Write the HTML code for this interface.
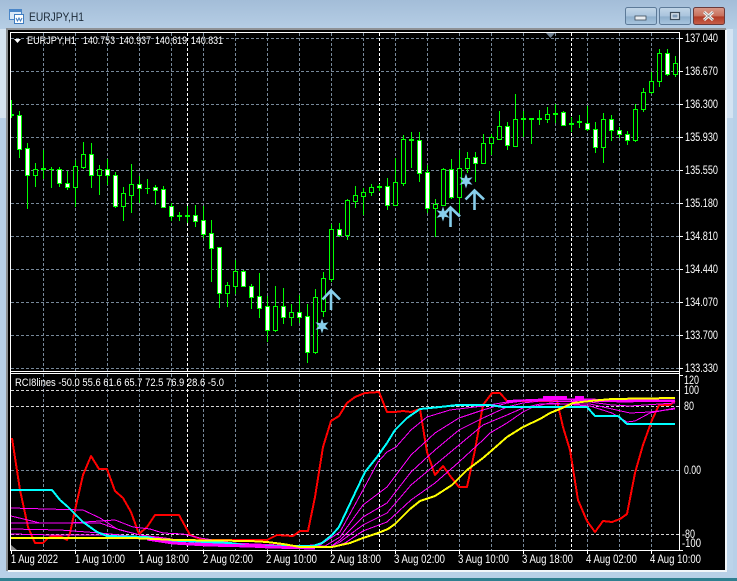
<!DOCTYPE html>
<html><head><meta charset="utf-8"><title>EURJPY,H1</title>
<style>
html,body{margin:0;padding:0;background:#b8d0e8;width:737px;height:581px;overflow:hidden}
svg{display:block}
text{font-family:"Liberation Sans",sans-serif;font-size:11.5px;fill:#fff}
</style></head><body>
<svg width="737" height="581" viewBox="0 0 737 581" xmlns="http://www.w3.org/2000/svg">
<defs>
<linearGradient id="tb" x1="0" y1="0" x2="0" y2="1"><stop offset="0" stop-color="#a3bdd8"/><stop offset="1" stop-color="#b6cee5"/></linearGradient>
<linearGradient id="b1" x1="0" y1="0" x2="0" y2="1"><stop offset="0" stop-color="#c3d6e8"/><stop offset=".5" stop-color="#a9c4dd"/><stop offset=".55" stop-color="#8fafcc"/><stop offset="1" stop-color="#a9c6e0"/></linearGradient>
<linearGradient id="b2" x1="0" y1="0" x2="0" y2="1"><stop offset="0" stop-color="#d99a8a"/><stop offset=".5" stop-color="#c8705c"/><stop offset=".55" stop-color="#b03a25"/><stop offset="1" stop-color="#c8604a"/></linearGradient>
<clipPath id="sub"><rect x="11" y="374" width="668" height="176"/></clipPath>
<clipPath id="main"><rect x="11" y="33" width="668" height="338"/></clipPath>
<path id="st" d="M0-7.500L1.600-2.800 6.500-3.750 3.200 0 6.500 3.750 1.600 2.800 0 7.500-1.600 2.800-6.500 3.750-3.200 0-6.500-3.750-1.600-2.800z" fill="#87ceeb"/>
</defs>

<!-- window chrome -->
<rect width="737" height="581" fill="#b8d0e8"/>
<rect width="737" height="29" fill="url(#tb)"/>
<rect x="0" y="29" width="6" height="89" fill="#d6e4f1"/>
<rect x="727" y="29" width="6" height="89" fill="#d3e3f2"/>
<rect x="727" y="118" width="6" height="452" fill="#bcd4ea"/>
<rect x="6" y="28" width="720" height="2" fill="#8f9296"/>
<rect x="6" y="28" width="2" height="543" fill="#8a8d90"/>
<rect x="725" y="30" width="2" height="542" fill="#f2f6fa"/>
<rect x="8" y="570" width="719" height="2" fill="#f2f6fa"/>
<rect x="0" y="578" width="737" height="3" fill="#2f7f90"/>

<!-- title icon -->
<rect x="9.500" y="9.500" width="12" height="10" fill="#dbe9f8" stroke="#4a86c8"/>
<rect x="10" y="10" width="11" height="2" fill="#4a86c8"/>
<rect x="14.500" y="14.500" width="9" height="9" fill="#fff" stroke="#3f7cc0"/>
<path d="M16 18l1.500 3 1.500-3 1.500 3 1.500-3" fill="none" stroke="#3f7cc0"/>
<text x="29" y="21" textLength="55" lengthAdjust="spacingAndGlyphs" style="font-size:12px;fill:#1c2a38">EURJPY,H1</text>

<!-- window buttons -->
<rect x="625.500" y="7.500" width="31" height="17" rx="2" fill="url(#b1)" stroke="#5d7a98"/>
<rect x="635" y="16" width="11" height="4" fill="#e8edf2" stroke="#3c4a58" stroke-width=".8"/>
<rect x="659.500" y="7.500" width="31" height="17" rx="2" fill="url(#b1)" stroke="#5d7a98"/>
<rect x="670.500" y="12.500" width="9" height="7" fill="#d8e2ec" stroke="#3c4a58" stroke-width="1.200"/>
<rect x="672.500" y="14.500" width="5" height="3" fill="#7d97b2"/>
<rect x="693.500" y="7.500" width="31" height="17" rx="2" fill="url(#b2)" stroke="#6a3a3a"/>
<path d="M704 12l9 8M713 12l-9 8" stroke="#eee" stroke-width="3" fill="none"/>
<path d="M704 12l9 8M713 12l-9 8" stroke="#3a3a3a" stroke-width=".5" fill="none"/>

<!-- chart background -->
<rect x="8" y="30" width="717" height="540" fill="#000"/>

<!-- grid -->
<g shape-rendering="crispEdges" fill="none">
<path stroke="#778899" stroke-dasharray="3 2" d="M11 38.500H679M11 71.500H679M11 104.500H679M11 137.500H679M11 170.500H679M11 203.500H679M11 236.500H679M11 269.500H679M11 302.500H679M11 335.500H679M11 368.500H679M11 470.500H679"/>
<path stroke="#778899" stroke-dasharray="3 2" d="M43.500 33V371M75.500 33V371M107.500 33V371M139.500 33V371M171.500 33V371M203.500 33V371M235.500 33V371M267.500 33V371M299.500 33V371M331.500 33V371M363.500 33V371M395.500 33V371M427.500 33V371M459.500 33V371M491.500 33V371M523.500 33V371M555.500 33V371M587.500 33V371M619.500 33V371M651.500 33V371"/>
<path stroke="#778899" stroke-dasharray="3 2" d="M43.500 374V550M75.500 374V550M107.500 374V550M139.500 374V550M171.500 374V550M203.500 374V550M235.500 374V550M267.500 374V550M299.500 374V550M331.500 374V550M363.500 374V550M395.500 374V550M427.500 374V550M459.500 374V550M491.500 374V550M523.500 374V550M555.500 374V550M587.500 374V550M619.500 374V550M651.500 374V550"/>
<path stroke="#d4d4d4" stroke-dasharray="3 2" d="M11 390.500H679M11 406.500H679M11 534.500H679"/>
<path stroke="#fff" stroke-dasharray="3 2" d="M187.500 33V371M379.500 33V371M571.500 33V371M187.500 374V550M379.500 374V550M571.500 374V550"/>
</g>

<!-- candles -->
<g clip-path="url(#main)" shape-rendering="crispEdges">
<path fill="none" stroke="#0f0" d="M11.500 100V118M19.500 111V158M27.500 143V209M35.500 163V187M43.500 150V179M51.500 167V188M59.500 167V187M67.500 171V190M75.500 160V207M83.500 142V169M91.500 143V188M99.500 165V195M107.500 159V185M115.500 172V208M123.500 187V221M131.500 164V213M139.500 176V203M147.500 179V194M155.500 185V205M163.500 186V208M171.500 203V221M179.500 212V221M187.500 206V223M195.500 205V227M203.500 206V238M211.500 220V282M219.500 247V308M227.500 282V307M235.500 260V294M243.500 270V287M251.500 284V309M259.500 273V318M267.500 296V342M275.500 286V332M283.500 288V324M291.500 304V326M299.500 295V323M307.500 304V363M315.500 289V354M323.500 272V317M331.500 224V282M339.500 223V237M347.500 199V240M355.500 186V208M363.500 188V215M371.500 184V196M379.500 184V191M387.500 178V210M395.500 158V205M403.500 135V186M411.500 132V168M419.500 132V182M427.500 165V213M435.500 199V237M443.500 168V206M451.500 159V199M459.500 150V213M467.500 152V173M475.500 152V182M483.500 134V163M491.500 134V155M499.500 111V139M507.500 122V150M515.500 94V146M523.500 111V137M531.500 118V144M539.500 110V125M547.500 107V123M555.500 104V123M563.500 111V126M571.500 117V132M579.500 115V128M587.500 106V131M595.500 122V153M603.500 113V163M611.500 115V141M619.500 127V138M627.500 131V145M635.500 104V142M643.500 88V112M651.500 72V94M659.500 49V87M667.500 49V76M675.500 56V77"/>
<path fill="#0f0" d="M9 114h5v2H9zM41 168h5v2h-5zM49 169h5v1h-5zM145 188h5v1h-5zM177 215h5v2h-5zM185 215h5v2h-5zM377 186h5v2h-5zM409 139h5v2h-5zM521 118h5v2h-5zM529 118h5v2h-5zM537 118h5v2h-5zM553 113h5v2h-5zM569 123h5v2h-5zM577 121h5v2h-5z"/>
<path fill="#000" stroke="#0f0" d="M33.500 169.500h4v6h-4zM73.500 166.500h4v21h-4zM81.500 154.500h4v13h-4zM97.500 169.500h4v6h-4zM121.500 193.500h4v13h-4zM129.500 184.500h4v11h-4zM225.500 285.500h4v8h-4zM233.500 271.500h4v15h-4zM273.500 306.500h4v24h-4zM289.500 312.500h4v5h-4zM313.500 297.500h4v55h-4zM321.500 278.500h4v33h-4zM329.500 229.500h4v50h-4zM345.500 200.500h4v35h-4zM353.500 195.500h4v6h-4zM361.500 192.500h4v4h-4zM369.500 187.500h4v5h-4zM393.500 182.500h4v23h-4zM401.500 139.500h4v44h-4zM433.500 204.500h4v4h-4zM441.500 169.500h4v36h-4zM457.500 168.500h4v29h-4zM465.500 158.500h4v10h-4zM481.500 143.500h4v20h-4zM489.500 137.500h4v6h-4zM497.500 126.500h4v13h-4zM513.500 119.500h4v27h-4zM545.500 114.500h4v5h-4zM601.500 119.500h4v28h-4zM633.500 109.500h4v31h-4zM641.500 92.500h4v17h-4zM649.500 81.500h4v11h-4zM657.500 53.500h4v28h-4zM673.500 63.500h4v11h-4z"/>
<path fill="#fff" stroke="#0f0" d="M17.500 115.500h4v34h-4zM25.500 148.500h4v27h-4zM57.500 169.500h4v14h-4zM65.500 183.500h4v4h-4zM89.500 154.500h4v21h-4zM105.500 169.500h4v6h-4zM113.500 175.500h4v31h-4zM137.500 184.500h4v4h-4zM153.500 187.500h4v3h-4zM161.500 189.500h4v18h-4zM169.500 206.500h4v10h-4zM193.500 215.500h4v6h-4zM201.500 220.500h4v14h-4zM209.500 233.500h4v15h-4zM217.500 247.500h4v46h-4zM241.500 271.500h4v15h-4zM249.500 286.500h4v11h-4zM257.500 296.500h4v12h-4zM265.500 306.500h4v24h-4zM281.500 306.500h4v11h-4zM297.500 312.500h4v5h-4zM305.500 316.500h4v36h-4zM337.500 229.500h4v6h-4zM385.500 186.500h4v19h-4zM417.500 140.500h4v33h-4zM425.500 172.500h4v36h-4zM449.500 169.500h4v28h-4zM473.500 157.500h4v6h-4zM505.500 126.500h4v19h-4zM561.500 112.500h4v13h-4zM585.500 123.500h4v6h-4zM593.500 129.500h4v18h-4zM609.500 119.500h4v11h-4zM617.500 130.500h4v4h-4zM625.500 134.500h4v6h-4zM665.500 53.500h4v21h-4z"/>
</g>

<!-- arrows and stars -->
<g fill="none" stroke="#87ceeb" stroke-width="2.600">
<path d="M322.500 299.500L331 290.500 340 299.500M331 290V310"/>
<path d="M441.500 216.500L450.500 207.500 460 216.500M450.500 207V227"/>
<path d="M465.500 199.500L474.500 190.500 484 199.500M474.500 190V210"/>
</g>
<use href="#st" x="322" y="326"/>
<use href="#st" x="443" y="214"/>
<use href="#st" x="466" y="181"/>

<!-- small markers -->
<path d="M546 33h9l-4.500 5z" fill="#6f8091"/>
<path d="M14 39h7l-3.500 4z" fill="#fff"/>
<path d="M11 545l6 5h-6z" fill="#8a8a8a"/>

<!-- RCI lines -->
<g clip-path="url(#sub)" fill="none" stroke-linejoin="round" shape-rendering="crispEdges">
<path stroke="#f00" stroke-width="2" d="M12 438L20 490 28 527 35 543 43 543 48 538 52 536 60 536 67 540 70 533 75 510 83 475 91 456 99 469 107 469 115 491 123 498 131 512 139 534 147 527 155 515 179 515 190 535 203 540 250 540 267 540 277 535 293 536 300 531 308 531 315 497 323 447 331 421 339 416 347 403 355 397 365 393 379 392 387 412 395 412 403 411 411 412 420 409 427 452 435 475 443 466 451 477 459 487 467 487 475 450 483 405 492 393 500 393 507 401 557 401 563 427 570 450 578 500 587 521 595 532 603 521 612 522 620 519 627 514 635 473 643 445 652 420 659 405 670 405 675 401"/>
<g stroke="#f0f" stroke-width="1">
<path d="M11 508L83 510 100 518 117 529 140 535 165 538 190 542 230 544 280 546 320 545 340 532 363 490 378 462 387 452 396 447 411 430 427 417 450 410 483 406 507 402 523 400 560 399 590 399 612 400 675 399"/>
<path d="M11 516L40 523 70 523 115 520 133 527 150 529 163 533 183 534 200 538 233 543 280 547 325 546 340 537 363 505 387 487 411 455 435 433 459 418 483 410 507 403 523 401 560 400 590 400 620 402 675 401"/>
<path d="M11 523L75 523 100 523 120 530 140 535 170 540 230 545 330 547 340 540 363 517 387 503 411 472 435 450 459 430 483 418 507 407 523 403 540 401 590 402 612 405 630 406 675 403"/>
<path d="M11 529L60 530 100 533 130 536 180 541 330 547 340 542 363 525 387 513 411 485 435 465 459 445 483 425 507 415 523 408 540 404 590 404 612 409 630 413 650 412 675 409"/>
<path d="M11 534L55 535 100 535 150 538 200 542 332 547 345 543 363 531 387 522 411 500 435 483 459 462 483 440 490 433 507 423 523 412 533 407 550 403 590 406 612 413 627 422 635 421 650 413 675 408"/>
</g>
<path stroke="#0ff" stroke-width="2" d="M11 490L52 490 60 500 68 507 83 522 97 532 107 536 147 537 160 540 230 543 250 546 313 546 322 543 332 535 339 527 347 510 355 493 365 472 377 457 387 443 395 430 407 418 420 409 440 407 457 405 490 405 503 407 587 407 595 416 618 416 627 424 675 424"/>
<path stroke="#f0f" stroke-width="3" d="M147 539L173 543 207 545 250 546 270 547 315 548"/>
<path stroke="#f0f" stroke-width="2" d="M507 401L557 399 600 401 675 401"/>
<path stroke="#f0f" stroke-width="4" d="M543 398H567M575 398H584"/>
<path stroke="#ff0" stroke-width="2" d="M11 538L133 538 177 540 250 541 267 542 283 544 300 547 332 547 350 543 363 538 378 533 388 529 395 524 410 509 420 501 435 496 452 485 467 470 483 458 490 452 507 437 523 427 540 419 550 413 560 409 573 403 590 401 612 399 675 398"/>
</g>

<!-- frames -->
<g shape-rendering="crispEdges" fill="none" stroke="#fff">
<path d="M10.500 32.500H679.500V550.500H10.500zM10 371.500H680M10 373.500H680"/>
<path d="M680 38.500h3M680 71.500h3M680 104.500h3M680 137.500h3M680 170.500h3M680 203.500h3M680 236.500h3M680 269.500h3M680 302.500h3M680 335.500h3M680 368.500h3M680 375.500h3M680 550.500h3"/>
<path d="M11.500 551v3M75.500 551v3M139.500 551v3M203.500 551v3M267.500 551v3M331.500 551v3M395.500 551v3M459.500 551v3M523.500 551v3M587.500 551v3M651.500 551v3"/>
</g>

<!-- header texts -->
<text x="27" y="44" textLength="49" lengthAdjust="spacingAndGlyphs" style="font-size:11px">EURJPY,H1</text>
<text x="83" y="44" textLength="32" lengthAdjust="spacingAndGlyphs" style="font-size:11px">140.753</text>
<text x="119" y="44" textLength="32" lengthAdjust="spacingAndGlyphs" style="font-size:11px">140.937</text>
<text x="155" y="44" textLength="32" lengthAdjust="spacingAndGlyphs" style="font-size:11px">140.619</text>
<text x="191" y="44" textLength="32" lengthAdjust="spacingAndGlyphs" style="font-size:11px">140.831</text>
<text x="15" y="386" textLength="209" lengthAdjust="spacingAndGlyphs" style="font-size:11px">RCI8lines -50.0 55.6 61.6 65.7 72.5 76.9 28.6 -5.0</text>

<!-- price axis -->
<text x="685" y="42" textLength="33" lengthAdjust="spacingAndGlyphs">137.040</text>
<text x="685" y="75" textLength="33" lengthAdjust="spacingAndGlyphs">136.670</text>
<text x="685" y="108" textLength="33" lengthAdjust="spacingAndGlyphs">136.300</text>
<text x="685" y="141" textLength="33" lengthAdjust="spacingAndGlyphs">135.930</text>
<text x="685" y="174" textLength="33" lengthAdjust="spacingAndGlyphs">135.550</text>
<text x="685" y="207" textLength="33" lengthAdjust="spacingAndGlyphs">135.180</text>
<text x="685" y="240" textLength="33" lengthAdjust="spacingAndGlyphs">134.810</text>
<text x="685" y="273" textLength="33" lengthAdjust="spacingAndGlyphs">134.440</text>
<text x="685" y="306" textLength="33" lengthAdjust="spacingAndGlyphs">134.070</text>
<text x="685" y="339" textLength="33" lengthAdjust="spacingAndGlyphs">133.700</text>
<text x="685" y="372" textLength="33" lengthAdjust="spacingAndGlyphs">133.330</text>
<text x="684" y="384" textLength="15" lengthAdjust="spacingAndGlyphs">120</text>
<text x="684" y="394" textLength="15" lengthAdjust="spacingAndGlyphs">100</text>
<text x="684" y="410" textLength="10" lengthAdjust="spacingAndGlyphs">80</text>
<text x="684" y="474" textLength="17" lengthAdjust="spacingAndGlyphs">0.00</text>
<text x="682" y="538" textLength="13" lengthAdjust="spacingAndGlyphs">-80</text>
<text x="682" y="547" textLength="19" lengthAdjust="spacingAndGlyphs">-100</text>

<!-- time axis -->
<text x="11" y="563" textLength="47" lengthAdjust="spacingAndGlyphs">1 Aug 2022</text>
<text x="75" y="563" textLength="50" lengthAdjust="spacingAndGlyphs">1 Aug 10:00</text>
<text x="139" y="563" textLength="50" lengthAdjust="spacingAndGlyphs">1 Aug 18:00</text>
<text x="203" y="563" textLength="50" lengthAdjust="spacingAndGlyphs">2 Aug 02:00</text>
<text x="266" y="563" textLength="51" lengthAdjust="spacingAndGlyphs">2 Aug 10:00</text>
<text x="330" y="563" textLength="51" lengthAdjust="spacingAndGlyphs">2 Aug 18:00</text>
<text x="394" y="563" textLength="51" lengthAdjust="spacingAndGlyphs">3 Aug 02:00</text>
<text x="458" y="563" textLength="51" lengthAdjust="spacingAndGlyphs">3 Aug 10:00</text>
<text x="522" y="563" textLength="51" lengthAdjust="spacingAndGlyphs">3 Aug 18:00</text>
<text x="586" y="563" textLength="51" lengthAdjust="spacingAndGlyphs">4 Aug 02:00</text>
<text x="650" y="563" textLength="51" lengthAdjust="spacingAndGlyphs">4 Aug 10:00</text>
</svg>
</body></html>
